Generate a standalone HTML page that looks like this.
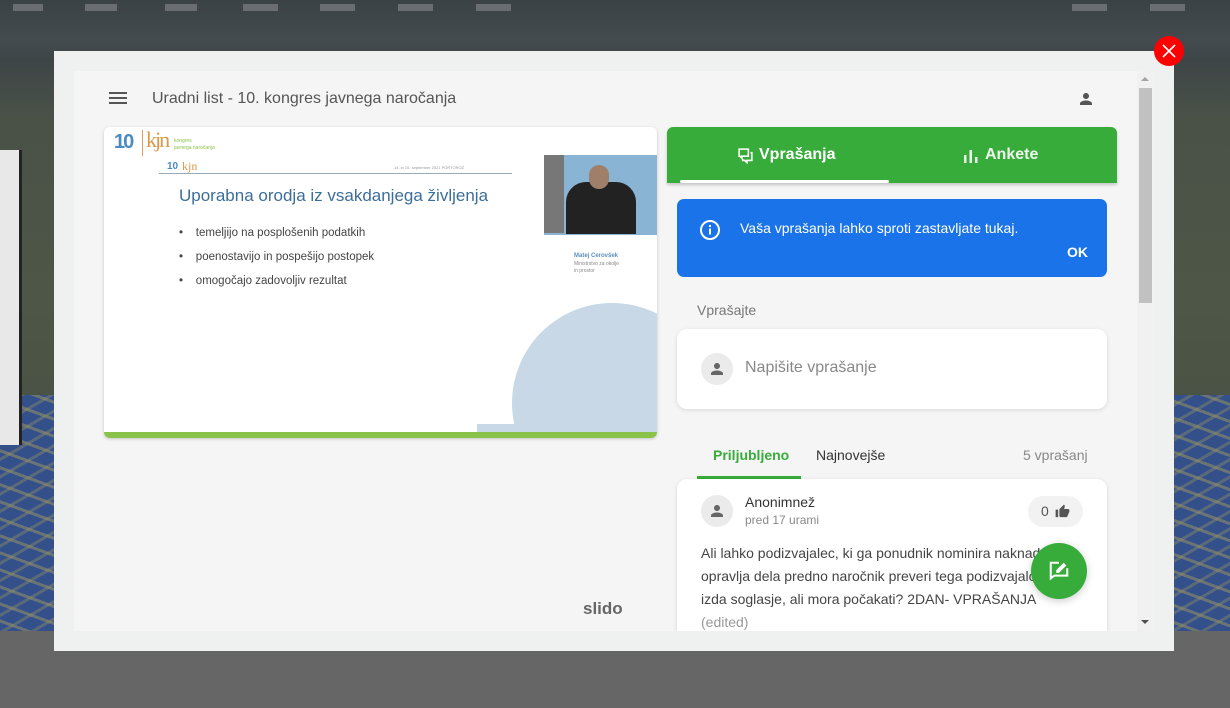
<!DOCTYPE html>
<html><head><meta charset="utf-8"><style>
*{margin:0;padding:0;box-sizing:border-box}
body{width:1230px;height:708px;overflow:hidden;position:relative;font-family:"Liberation Sans",Arial,sans-serif;background:#666}
.abs{position:absolute}
</style></head><body>
<div class="abs" style="left:0;top:0;width:1230px;height:631px;background:linear-gradient(#3b4245 0,#444b4e 40px,#3e4547 60px,#4a5248 120px,#4e5647 300px,#4b5346 390px)"></div>
<div class="abs" style="left:0;top:395px;width:1230px;height:236px;background:#34508a"></div>
<div class="abs" style="left:0;top:395px;width:1230px;height:236px;background:repeating-linear-gradient(20deg,transparent 0 8px,rgba(150,145,100,.55) 8px 11px,transparent 11px 16px),repeating-linear-gradient(-30deg,transparent 0 12px,rgba(150,145,100,.4) 12px 15px)"></div>
<div class="abs" style="left:0;top:150px;width:22px;height:295px;background:#e8e8e8;border-right:3px solid #222"></div>
<div class="abs" style="left:13px;top:4px;width:30px;height:7px;background:#6a6e70"></div>
<div class="abs" style="left:85px;top:4px;width:32px;height:7px;background:#6a6e70"></div>
<div class="abs" style="left:165px;top:4px;width:32px;height:7px;background:#6a6e70"></div>
<div class="abs" style="left:243px;top:4px;width:35px;height:7px;background:#6a6e70"></div>
<div class="abs" style="left:320px;top:4px;width:35px;height:7px;background:#6a6e70"></div>
<div class="abs" style="left:398px;top:4px;width:35px;height:7px;background:#6a6e70"></div>
<div class="abs" style="left:476px;top:4px;width:35px;height:7px;background:#6a6e70"></div>
<div class="abs" style="left:1072px;top:4px;width:35px;height:7px;background:#6a6e70"></div>
<div class="abs" style="left:1150px;top:4px;width:35px;height:7px;background:#6a6e70"></div>
<div class="abs" style="left:0;top:631px;width:1230px;height:77px;background:#666"></div>
<div class="abs" style="left:54px;top:51px;width:1120px;height:600px;background:#eff0f0"></div>
<div class="abs" style="left:74px;top:71px;width:1080px;height:560px;background:#f5f5f5;overflow:hidden">
 <div class="abs" style="left:35px;top:21px;width:18px;height:2px;background:#555;box-shadow:0 5px 0 #555,0 10px 0 #555"></div>
 <div class="abs" style="left:78px;top:19px;font-size:16px;color:#555">Uradni list - 10. kongres javnega naročanja</div>
 <svg class="abs" style="left:1003px;top:19px" width="18" height="18" viewBox="0 0 24 24"><path fill="#555" d="M12 12c2.2 0 4-1.8 4-4s-1.8-4-4-4-4 1.8-4 4 1.8 4 4 4zm0 2c-2.7 0-8 1.3-8 4v2h16v-2c0-2.7-5.3-4-8-4z"/></svg>
 <div class="abs" style="left:30px;top:56px;width:553px;height:311px;background:#fff;border-radius:6px;overflow:hidden;box-shadow:0 1px 3px rgba(0,0,0,.2)">
  <div class="abs" style="left:10px;top:4px;font-size:20px;font-weight:bold;color:#4a8bc2;letter-spacing:-2px">10</div>
  <div class="abs" style="left:38px;top:3px;width:1px;height:26px;background:#e0a060"></div>
  <div class="abs" style="left:42px;top:0px;font-size:22px;font-family:'Liberation Serif',serif;color:#d89a4a;letter-spacing:-2px">kjn</div>
  <div class="abs" style="left:70px;top:11px;font-size:5px;color:#8bc34a;line-height:7px">kongres<br>javnega naročanja</div>
  <div class="abs" style="left:55px;top:46px;width:353px;height:1px;background:#9ab"></div>
  <div class="abs" style="left:63px;top:34px;font-size:10px;color:#4a8bc2;font-weight:bold">10</div>
  <div class="abs" style="left:78px;top:32px;font-size:12px;font-family:'Liberation Serif',serif;color:#d89a4a">kjn</div>
  <div class="abs" style="left:290px;top:38px;font-size:4px;color:#999">14. in 15. september 2021 PORTOROŽ</div>
  <div class="abs" style="left:75px;top:59px;font-size:17px;color:#3d6e9a">Uporabna orodja iz vsakdanjega življenja</div>
  <div class="abs" style="left:75px;top:94px;font-size:11.5px;color:#444;line-height:24px">•&nbsp;&nbsp;&nbsp;&nbsp;temeljijo na posplošenih podatkih<br>•&nbsp;&nbsp;&nbsp;&nbsp;poenostavijo in pospešijo postopek<br>•&nbsp;&nbsp;&nbsp;&nbsp;omogočajo zadovoljiv rezultat</div>
  <div class="abs" style="left:440px;top:28px;width:113px;height:80px;background:#8ab4d4"></div>
  <div class="abs" style="left:440px;top:28px;width:20px;height:78px;background:#777"></div>
  <div class="abs" style="left:462px;top:55px;width:70px;height:52px;background:#222;border-radius:20px 20px 0 0"></div>
  <div class="abs" style="left:485px;top:38px;width:20px;height:24px;background:#a07f6a;border-radius:10px"></div>
  <div class="abs" style="left:470px;top:126px;font-size:6px;color:#5b8fc2;font-weight:bold">Matej Cerovšek</div>
  <div class="abs" style="left:470px;top:134px;font-size:5px;color:#888;line-height:7px">Ministrstvo za okolje<br>in prostor</div>
  <div class="abs" style="left:408px;top:176px;width:200px;height:200px;border-radius:50%;background:#c8d8e6"></div>
  <div class="abs" style="left:373px;top:297px;width:40px;height:10px;background:#c8d8e6"></div>
  <div class="abs" style="left:0;top:305px;width:553px;height:6px;background:#8bc34a"></div>
 </div>
 <div class="abs" style="left:509px;top:528px;font-size:17px;font-weight:bold;color:#666">slido</div>
 <div class="abs" style="left:593px;top:56px;width:450px;height:56px;background:#37ac3a;border-radius:6px 6px 0 0;box-shadow:0 2px 3px rgba(0,0,0,.2)">
  <svg class="abs" style="left:70px;top:20px" width="17" height="17" viewBox="0 0 24 24"><path fill="none" stroke="#fff" stroke-width="2.2" d="M3 3h13v10H7v3L4 13H3z M8 17v2h3l3 3v-3h7V8h-2"/></svg>
  <div class="abs" style="left:92px;top:19px;font-size:16px;font-weight:bold;color:#fff">Vprašanja</div>
  <div class="abs" style="left:13px;top:53px;width:209px;height:3px;background:#fff;border-radius:2px"></div>
  <svg class="abs" style="left:296px;top:21px" width="16" height="16" viewBox="0 0 16 16"><rect x="1" y="7" width="2.5" height="8" fill="#e8f5e8"/><rect x="6.5" y="2" width="2.5" height="13" fill="#e8f5e8"/><rect x="12" y="9" width="2.5" height="6" fill="#e8f5e8"/></svg>
  <div class="abs" style="left:318px;top:19px;font-size:16px;font-weight:bold;color:#eef7ee">Ankete</div>
 </div>
 <div class="abs" style="left:603px;top:128px;width:430px;height:78px;background:#1a73e8;border-radius:7px">
  <svg class="abs" style="left:22px;top:20px" width="22" height="22" viewBox="0 0 22 22"><circle cx="11" cy="11" r="9" fill="none" stroke="#fff" stroke-width="2"/><rect x="10" y="9.5" width="2" height="6" fill="#fff"/><rect x="10" y="6" width="2" height="2" fill="#fff"/></svg>
  <div class="abs" style="left:63px;top:21px;font-size:14px;color:#fff">Vaša vprašanja lahko sproti zastavljate tukaj.</div>
  <div class="abs" style="left:390px;top:45px;font-size:14px;font-weight:bold;color:#fff">OK</div>
 </div>
 <div class="abs" style="left:623px;top:231px;font-size:14px;color:#777">Vprašajte</div>
 <div class="abs" style="left:603px;top:258px;width:430px;height:80px;background:#fff;border-radius:10px;box-shadow:0 1px 4px rgba(0,0,0,.12)">
  <div class="abs" style="left:24px;top:24px;width:32px;height:32px;border-radius:50%;background:#ebebeb"></div>
  <svg class="abs" style="left:31px;top:31px" width="18" height="18" viewBox="0 0 24 24"><path fill="#666" d="M12 12c2.2 0 4-1.8 4-4s-1.8-4-4-4-4 1.8-4 4 1.8 4 4 4zm0 2c-2.7 0-8 1.3-8 4v2h16v-2c0-2.7-5.3-4-8-4z"/></svg>
  <div class="abs" style="left:68px;top:30px;font-size:16px;color:#888">Napišite vprašanje</div>
 </div>
 <div class="abs" style="left:639px;top:376px;font-size:14px;font-weight:bold;color:#37ac3a">Priljubljeno</div>
 <div class="abs" style="left:623px;top:405px;width:104px;height:3px;background:#37ac3a"></div>
 <div class="abs" style="left:742px;top:376px;font-size:14px;color:#333">Najnovejše</div>
 <div class="abs" style="left:949px;top:376px;font-size:14px;color:#888">5 vprašanj</div>
 <div class="abs" style="left:603px;top:408px;width:430px;height:170px;background:#fff;border-radius:10px;box-shadow:0 1px 4px rgba(0,0,0,.12)">
  <div class="abs" style="left:24px;top:16px;width:32px;height:32px;border-radius:50%;background:#ebebeb"></div>
  <svg class="abs" style="left:31px;top:23px" width="18" height="18" viewBox="0 0 24 24"><path fill="#666" d="M12 12c2.2 0 4-1.8 4-4s-1.8-4-4-4-4 1.8-4 4 1.8 4 4 4zm0 2c-2.7 0-8 1.3-8 4v2h16v-2c0-2.7-5.3-4-8-4z"/></svg>
  <div class="abs" style="left:68px;top:15px;font-size:14px;color:#333">Anonimnež</div>
  <div class="abs" style="left:68px;top:34px;font-size:12px;color:#888">pred 17 urami</div>
  <div class="abs" style="left:351px;top:17px;width:55px;height:31px;border-radius:16px;background:#f2f2f2"></div>
  <div class="abs" style="left:364px;top:24px;font-size:14px;color:#555">0</div>
  <svg class="abs" style="left:378px;top:25px" width="15" height="15" viewBox="0 0 24 24"><path fill="#555" d="M1 21h4V9H1v12zm22-11c0-1.1-.9-2-2-2h-6.3l1-4.6v-.3c0-.4-.2-.8-.4-1.1L14.2 1 7.6 7.6C7.2 7.9 7 8.4 7 9v10c0 1.1.9 2 2 2h9c.8 0 1.5-.5 1.8-1.2l3-7.1c.1-.2.2-.5.2-.7v-2z"/></svg>
  <div class="abs" style="left:24px;top:63px;width:400px;font-size:14px;color:#444;line-height:23px;white-space:nowrap">Ali lahko podizvajalec, ki ga ponudnik nominira naknadno,<br>opravlja dela predno naročnik preveri tega podizvajalca in<br>izda soglasje, ali mora počakati? 2DAN- VPRAŠANJA<br><span style="color:#999">(edited)</span></div>
 </div>
 <div class="abs" style="left:957px;top:472px;width:56px;height:56px;border-radius:50%;background:#37ac3a;box-shadow:0 2px 8px rgba(0,0,0,.2)">
  <svg class="abs" style="left:17px;top:17px" width="22" height="22" viewBox="0 0 24 24"><path fill="none" stroke="#fff" stroke-width="2.2" d="M12 3H3v17l4-3h14v-8"/><path fill="#fff" d="M9 14v-3l8-8 3 3-8 8z"/></svg>
 </div>
 <div class="abs" style="left:1063px;top:0;width:17px;height:560px;background:#f1f1f1"></div>
 <div class="abs" style="left:1065px;top:17px;width:13px;height:215px;background:#c1c1c1"></div>
 <div class="abs" style="left:1067px;top:6px;width:0;height:0;border-left:4px solid transparent;border-right:4px solid transparent;border-bottom:4px solid #a3a3a3"></div>
 <div class="abs" style="left:1067px;top:549px;width:0;height:0;border-left:4px solid transparent;border-right:4px solid transparent;border-top:4px solid #505050"></div>
</div>
<div class="abs" style="left:1154px;top:36px;width:30px;height:30px;border-radius:50%;background:#f00"></div>
<svg class="abs" style="left:1161px;top:43px" width="16" height="16" viewBox="0 0 16 16"><path d="M2 2L14 14M14 2L2 14" stroke="#fff" stroke-width="1.6"/></svg>
</body></html>
